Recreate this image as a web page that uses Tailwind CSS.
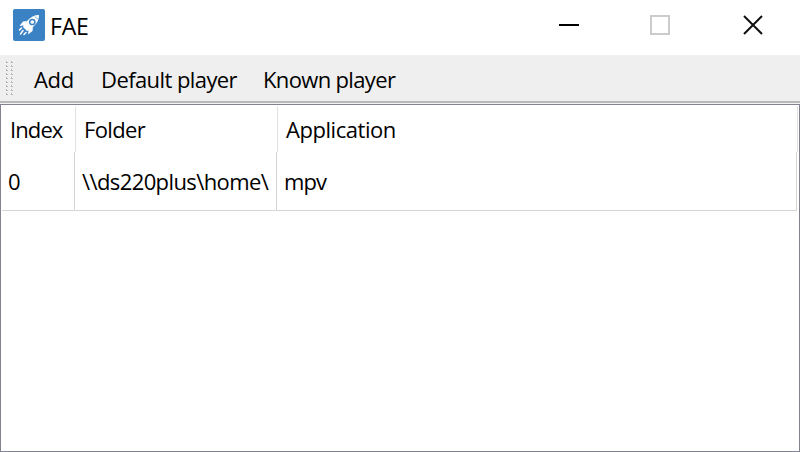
<!DOCTYPE html>
<html lang="en"><head><meta charset="utf-8"><title>FAE</title>
<script src="https://cdn.jsdelivr.net/npm/@tailwindcss/browser@4"></script></head>
<body class="w-[800px] h-[452px] overflow-hidden bg-white text-black font-['Open_Sans',sans-serif] text-[22px] leading-[30px] whitespace-nowrap flex flex-col">
<header class="h-[55px] shrink-0 flex items-start">
<svg class="ml-[13px] mt-[9px] size-8 shrink-0" viewBox="0 0 32 32"><rect width="32" height="32" rx="2" fill="#3b82c4"/><path d="M26 6c-5 0-8 2-11 5l-4 4-1 3 4 4 3-1 4-4c3-3 5-6 5-11z" fill="#fff"/><path d="M14 12l-4 .5-3.500 4.500 4-.5zM20 18l-.5 4-4.500 3.500.5-4z" fill="#fff"/><circle cx="19.3" cy="13" r="2.6" fill="#fff" stroke="#3b82c4" stroke-width="1.5"/><path d="M22 7.500l2.800 2.800" stroke="#3b82c4" stroke-width=".8"/><path d="M8.500 19l-2 2M10 21.500l-2.500 3.500M13 23.500l-2 2" stroke="#fff" stroke-width="1.500" stroke-linecap="round"/></svg>
<h1 class="ml-[5px] mt-[11px] text-[23px] tracking-[-0.2px]">FAE</h1>
<svg class="ml-auto mr-[34px] mt-[13px] w-[208px] h-6" viewBox="0 0 208 24" fill="none" stroke-width="2"><path d="M1 12h20" stroke="#000"/><path d="M93 3h18v18H93z" stroke="#ccc"/><path d="M186 3l18 18m0-18l-18 18" stroke="#111"/></svg>
</header>
<nav class="h-[46px] shrink-0 bg-[#efefef] flex items-start">
<svg class="ml-[6px] mt-[6px] w-[7px] h-[34px] shrink-0"><defs><pattern id="grip" width="5" height="4" patternUnits="userSpaceOnUse"><path d="M0 0h2v2H0z" fill="#fff"/><path d="M0 0h1v2H0zM1 1h1v1H1z" fill="#b4b4b4"/></pattern></defs><rect width="7" height="34" fill="url(#grip)"/></svg>
<span class="ml-[21px] mt-[9px] w-[67px] tracking-[-0.3px]">Add</span><span class="mt-[9px] w-[162px] tracking-[-0.58px]">Default player</span><span class="mt-[9px] tracking-[-0.65px]">Known player</span>
</nav>
<div class="h-[3px] shrink-0 border-t-2 border-[#b8b8b8] bg-[#f4f4f4]"></div>
<main class="grow border border-[#83838f]">
<div class="h-[47px] pt-px flex"><div class="w-[75px] border-r border-[#e2e2e2] pl-[9px] pt-[8px] tracking-[-0.9px]">Index</div><div class="w-[202px] border-r border-[#e2e2e2] pl-[8px] pt-[8px] tracking-[-0.65px]">Folder</div><div class="w-[520px] border-r border-[#e2e2e2] pl-[8px] pt-[8px] tracking-[-0.45px]">Application</div></div>
<div class="h-[59px] ml-px w-[795px] border-b border-[#d5d5d5] flex"><div class="w-[73px] border-r border-[#d5d5d5] pl-[6px] pt-[14px]">0</div><div class="w-[202px] border-r border-[#d5d5d5] pl-[7px] pt-[14px] tracking-[-0.6px]">\\ds220plus\home\</div><div class="w-[520px] border-r border-[#d5d5d5] pl-[7px] pt-[14px] tracking-[-0.9px]">mpv</div></div>
</main>
</body></html>
